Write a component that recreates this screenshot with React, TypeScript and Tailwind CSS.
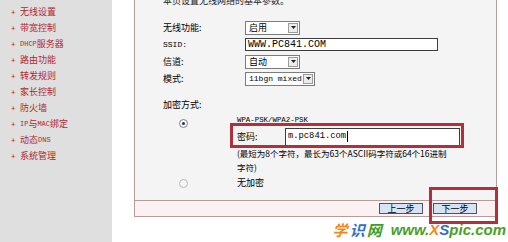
import React from 'react';

const menuItems: { pre?: string; cn: string; post?: string; after?: string }[] = [
  { cn: '无线设置' },
  { cn: '带宽控制' },
  { pre: 'DHCP', cn: '服务器' },
  { cn: '路由功能' },
  { cn: '转发规则' },
  { cn: '家长控制' },
  { cn: '防火墙' },
  { pre: 'IP', cn: '与', post: 'MAC', after: '绑定' },
  { cn: '动态', post: 'DNS' },
  { cn: '系统管理' },
];

function Sidebar() {
  return (
    <div className="flex w-[112px] shrink-0 flex-col bg-[#dfdfdf] pt-[4px] text-[#b3262c]">
      {menuItems.map((item, i) => (
        <div key={i} className="flex h-[16px] items-center whitespace-nowrap pl-[11px]">
          <span className="w-[9px] text-[8px] leading-none">+</span>
          {item.pre && <span className="font-['Liberation_Mono',monospace] text-[7px]">{item.pre}</span>}
          <span>{item.cn}</span>
          {item.post && <span className="font-['Liberation_Mono',monospace] text-[7px]">{item.post}</span>}
          {item.after && <span>{item.after}</span>}
        </div>
      ))}
    </div>
  );
}

function Arrow() {
  return (
    <span className="mr-[1px] flex h-[10px] w-[10px] shrink-0 items-center justify-center border border-[#9c9c9c] bg-[#ececec]">
      <svg width="5" height="3" viewBox="0 0 5 3">
        <path d="M0 0h5L2.5 3z" fill="#222" />
      </svg>
    </span>
  );
}

function Select({ value, className, mono }: { value: string; className: string; mono?: boolean }) {
  return (
    <div className={`flex h-[14px] items-center border border-[#7c7c7c] bg-white ${className}`}>
      <span
        className={`flex-1 whitespace-nowrap pl-[3px] ${mono ? "font-['Liberation_Mono',monospace] text-[8px]" : ''}`}
      >
        {value}
      </span>
      <Arrow />
    </div>
  );
}

function Radio({ checked }: { checked?: boolean }) {
  return (
    <span
      className={`flex h-[9px] w-[9px] items-center justify-center rounded-full border bg-[#f6f6f6] ${
        checked ? 'border-[#7d8590]' : 'border-[#b8b8b8]'
      }`}
    >
      {checked && <span className="h-[3px] w-[3px] rounded-full bg-[#2a3340]" />}
    </span>
  );
}

function Button({ label }: { label: string }) {
  return (
    <button
      type="button"
      className="flex h-[11px] w-[44px] items-center justify-center border border-[#4d5560] bg-[#d5e3f5] text-[9px] leading-none text-black"
    >
      {label}
    </button>
  );
}

export default function App() {
  return (
    <div className="relative flex h-[242px] w-[508px] overflow-hidden bg-white font-['Noto_Sans_CJK_SC',sans-serif] text-[9px] text-black">
      <Sidebar />

      <div className="flex flex-1 flex-col pl-[22px] pr-[11px]">
        <div className="flex flex-col border-x border-b border-[#b79c9c] bg-[#f4f4f4]">
          <div className="flex h-[200px] flex-col pl-[28px]">
            <div className="-mt-[5px] h-[12px] leading-[12px] text-[#222]">本页设置无线网络的基本参数。</div>

            <div className="mt-[12px] grid grid-cols-[82px_1fr]">
              <div className="flex h-[17px] items-center">无线功能:</div>
              <div className="flex h-[17px] items-center">
                <Select value="启用" className="w-[55px]" />
              </div>

              <div className="flex h-[17px] items-center font-['Liberation_Mono',monospace] text-[8px]">SSID:</div>
              <div className="flex h-[17px] items-center">
                <div className="flex h-[13px] w-[193px] items-center border border-[#3c3c3c] bg-white pl-[2px] font-['Liberation_Mono',monospace] text-[10px]">
                  WWW.PC841.COM
                </div>
              </div>

              <div className="flex h-[17px] items-center">信道:</div>
              <div className="flex h-[17px] items-center">
                <Select value="自动" className="w-[55px]" />
              </div>

              <div className="flex h-[17px] items-center">模式:</div>
              <div className="flex h-[17px] items-center">
                <Select value="11bgn mixed" mono className="w-[70px]" />
              </div>
            </div>

            <div className="mt-[12px] h-[12px] leading-[12px]">加密方式:</div>

            <div className="flex">
              <div className="flex w-[74px] flex-col pl-[16px]">
                <div className="mt-[6px] flex h-[12px] items-center">
                  <Radio checked />
                </div>
              </div>
              <div className="flex flex-col">
                <div className="mt-[3px] h-[12px] font-['Liberation_Mono',monospace] text-[7.4px] leading-[12px]">
                  WPA-PSK/WPA2-PSK
                </div>
                <div className="mt-[1px] flex h-[19px] items-center">
                  <span className="w-[48px]">密码:</span>
                  <div className="flex h-[18px] w-[175px] items-center border border-[#3c3c3c] bg-white pl-[2px] font-['Liberation_Mono',monospace] text-[8.8px]">
                    m.pc841.com
                    <span className="ml-[1px] h-[11px] w-px bg-black" />
                  </div>
                </div>
                <div className="whitespace-nowrap text-[8.5px] leading-[14px]">
                  (最短为8个字符，最长为63个ASCII码字符或64个16进制
                </div>
                <div className="text-[8.5px] leading-[14px]">字符)</div>
              </div>
            </div>

            <div className="mt-[2px] flex h-[14px] items-center">
              <div className="w-[74px] pl-[16px]">
                <Radio />
              </div>
              <span>无加密</span>
            </div>
          </div>

          <div className="flex h-[16px] items-center justify-end gap-[10px] border-t border-[#b79c9c] bg-[#faf2f2] pr-[19px]">
            <Button label="上一步" />
            <Button label="下一步" />
          </div>
        </div>

        <div className="-mr-[9px] mt-[5px] flex justify-end text-[15px] leading-[16px] font-bold italic">
          <span className="text-[#f0891d]">学</span>
          <span className="ml-[2px] text-[#2f6fc4]">识</span>
          <span className="ml-[2px] text-[#3c9e2e]">网</span>
          <span className="ml-[9px] font-['Liberation_Sans',sans-serif] text-[#4a9e26]">
            www.<span className="text-[#f0891d]">X</span>
            <span className="text-[#2f6fc4]">S</span>pic.com
          </span>
        </div>
      </div>

      {/* annotation boxes drawn over the screenshot */}
      <div className="pointer-events-none absolute left-[230px] top-[123px] h-[25px] w-[234px] border-[3px] border-[#b0303c]" />
      <div className="pointer-events-none absolute left-[429px] top-[187px] h-[37px] w-[69px] border-[3px] border-[#b0303c]" />
    </div>
  );
}
